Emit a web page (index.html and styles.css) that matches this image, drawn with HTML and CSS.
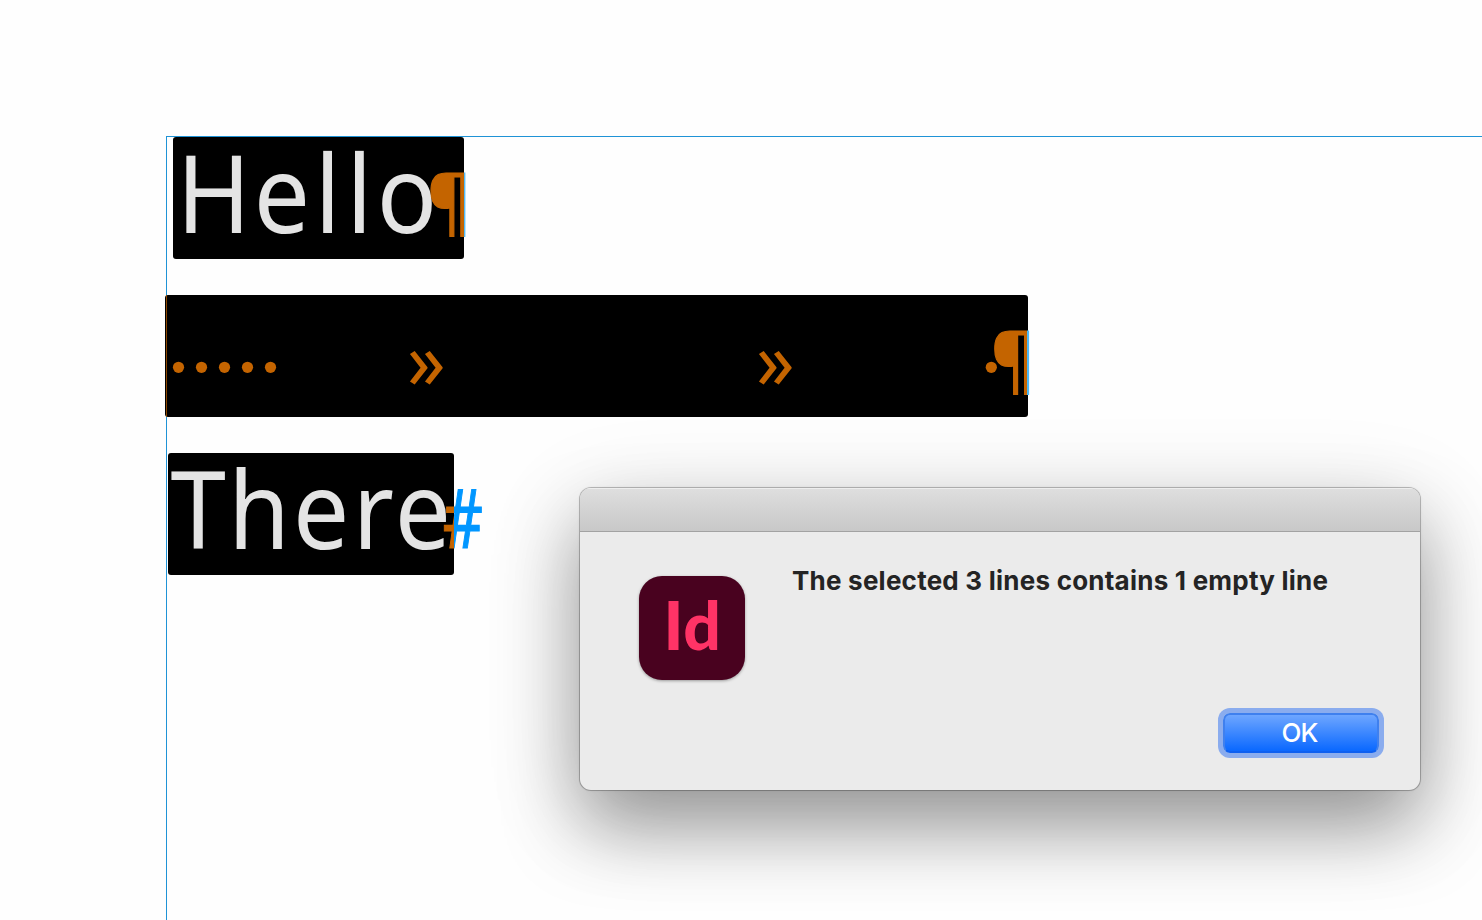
FILE: index.html
```html
<!DOCTYPE html>
<html lang="en">
<head>
<meta charset="UTF-8">
<meta name="viewport" content="width=device-width, initial-scale=1.0">
<title>Empty Lines</title>
<link rel="stylesheet" href="styles.css">
</head>
<body>
<div class="page">
    <div class="text-frame">
        <div class="line line-hello">
            <svg width="291" height="122">
                <defs>
                    <linearGradient id="mark-1" gradientUnits="userSpaceOnUse" x1="0" x2="612.6" y1="0" y2="0">
                        <stop offset="0.5" stop-color="#c46400"/>
                        <stop offset="0.5" stop-color="#4bb8f5"/>
                    </linearGradient>
                </defs>
                <text class="story" transform="scale(0.92 1)" x="4.2 87.9 154 188.5 221.5" y="96">Hello</text>
                <text class="pilcrow" transform="scale(0.95 1)" x="267.6" y="90" fill="url(#mark-1)" stroke="url(#mark-1)">¶</text>
            </svg>
        </div>
        <div class="line line-blank">
            <svg width="863" height="122">
                <defs>
                    <linearGradient id="mark-2" gradientUnits="userSpaceOnUse" x1="0" x2="1814.7" y1="0" y2="0">
                        <stop offset="0.5" stop-color="#c46400"/>
                        <stop offset="0.5" stop-color="#4bb8f5"/>
                    </linearGradient>
                </defs>
                <rect class="mark" x="1" y="0" width="1" height="122" opacity="0.7"/>
                <g class="mark">
                    <circle cx="13.5" cy="72.3" r="5.6"/>
                    <circle cx="36.5" cy="72.3" r="5.6"/>
                    <circle cx="59.5" cy="72.3" r="5.6"/>
                    <circle cx="82.5" cy="72.3" r="5.6"/>
                    <circle cx="105.5" cy="72.3" r="5.6"/>
                    <circle cx="826.3" cy="72.3" r="5.6"/>
                </g>
                <text class="tab mark" transform="scale(0.95 1)" x="254.7" y="94.5">»</text>
                <text class="tab mark" transform="scale(0.95 1)" x="622.1" y="94.5">»</text>
                <text class="pilcrow" transform="scale(0.95 1)" x="869.5" y="90" fill="url(#mark-2)" stroke="url(#mark-2)">¶</text>
            </svg>
        </div>
        <div class="line line-there">
            <svg width="286" height="122">
                <defs>
                    <linearGradient id="mark-3" gradientUnits="userSpaceOnUse" x1="0" x2="752.6" y1="0" y2="0">
                        <stop offset="0.5" stop-color="#c46400"/>
                        <stop offset="0.5" stop-color="#0096ff"/>
                    </linearGradient>
                </defs>
                <text class="story" transform="scale(0.92 1)" x="2.6 65.5 135.9 200.8 246.5" y="96">There</text>
                <text class="hash" transform="scale(0.76 1)" x="361.5" y="95.5" fill="url(#mark-3)" stroke="url(#mark-3)">#</text>
            </svg>
        </div>
    </div>
</div>

<div class="dialog">
    <div class="title-bar"></div>
    <div class="dialog-body">
        <div class="app-icon">
            <svg width="106" height="104">
                <text x="24.5 44.3" y="74">Id</text>
            </svg>
        </div>
        <div class="dialog-main">
            <p class="message">The selected 3 lines contains 1 empty line</p>
            <button class="ok-button">OK</button>
        </div>
    </div>
</div>
</body>
</html>
```
FILE: styles.css
```css
* {
    box-sizing: border-box;
}
body {
    margin: 0;
    background-color: #fefefe;
    font-family: Inter, "Liberation Sans", sans-serif;
}
.page {
    height: 920px;
    padding: 136px 0 0 166px;
    overflow: hidden;
}
.text-frame {
    display: flex;
    flex-direction: column;
    align-items: flex-start;
    gap: 36px;
    height: 784px;
    border-top: 1px solid #1f93d6;
    border-left: 1px solid #1f93d6;
}

/* Selected lines */
.line {
    height: 122px;
    background-color: #000;
    border-radius: 3px;
}
.line svg {
    display: block;
    overflow: visible;
}
.line-hello {
    margin-left: 6px;
}
.line-blank {
    margin-left: -2px;
}
.line-there {
    margin-left: 1px;
}
.story {
    font-family: "Noto Sans", sans-serif;
    font-size: 108.5px;
    fill: #e4e4e4;
}
.mark {
    fill: #c46400;
}
.pilcrow {
    font-family: "Noto Sans", sans-serif;
    font-size: 72px;
    stroke-width: 1.2px;
}
.tab {
    font-family: "Noto Sans", sans-serif;
    font-size: 80px;
}
.hash {
    font-family: "Noto Sans", sans-serif;
    font-size: 82px;
    stroke-width: 1.2px;
}

/* Alert */
.dialog {
    position: absolute;
    left: 580px;
    top: 488px;
    width: 840px;
    height: 302px;
    background-color: #ebebeb;
    border-radius: 11px;
    overflow: hidden;
    box-shadow: 0 0 0 1px rgba(0, 0, 0, 0.22), 0 0 3px rgba(0, 0, 0, 0.12), 0 38px 76px rgba(0, 0, 0, 0.34), 0 22px 100px rgba(0, 0, 0, 0.14);
}
.title-bar {
    height: 44px;
    background: linear-gradient(#dedede, #c8c8c8);
    border-top: 1px solid #eee;
    border-bottom: 1px solid #a2a2a2;
}
.dialog-body {
    display: flex;
    gap: 47px;
    height: 258px;
    padding: 0 41px 37px 59px;
}
.app-icon {
    width: 106px;
    height: 104px;
    margin-top: 44px;
    background-color: #49021f;
    border-radius: 23px;
    box-shadow: 0 1px 3px rgba(0, 0, 0, 0.35);
}
.app-icon svg {
    display: block;
}
.app-icon text {
    font-family: Lato, sans-serif;
    font-size: 66px;
    font-weight: 900;
    fill: #ff3366;
}
.dialog-main {
    display: flex;
    flex: 1;
    flex-direction: column;
    justify-content: space-between;
    padding-top: 33px;
}
.message {
    margin: 0;
    font-size: 26px;
    font-weight: bold;
    line-height: 32px;
    letter-spacing: 0.23px;
    white-space: nowrap;
    color: #242424;
}
.ok-button {
    align-self: flex-end;
    width: 156px;
    height: 40px;
    padding: 0 3px 0 0;
    border: 2px solid #3f80ee;
    border-bottom-color: #0d5ff0;
    border-radius: 7px;
    background: linear-gradient(#6ea6ff, #0a68ff);
    box-shadow: 0 0 0 5px #8aacee;
    font-family: inherit;
    font-size: 26px;
    font-weight: 500;
    line-height: 36px;
    letter-spacing: -1px;
    color: #fff;
}
```
